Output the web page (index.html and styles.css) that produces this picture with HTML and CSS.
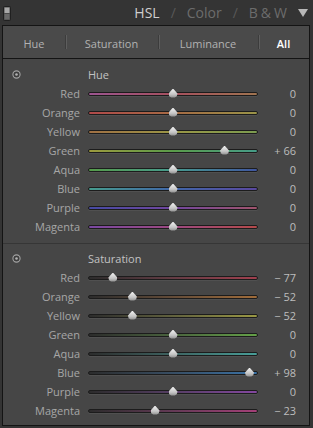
FILE: index.html
```html
<!DOCTYPE html>
<html>
<head>
<meta charset="utf-8">
<link rel="stylesheet" href="styles.css">
</head>
<body>
<header class="top">
  <svg class="grip" width="8" height="15" viewBox="0 0 8 15">
    <rect x="0.5" y="0.5" width="7" height="14" rx="1" fill="#4a4a4a" stroke="#202020"/>
    <rect x="1.5" y="1.5" width="5" height="5.5" fill="#a8a8a8"/>
    <rect x="1.5" y="8" width="5" height="5.5" fill="#6a6a6a"/>
  </svg>
  <div class="title">
    <span class="on">HSL</span><span class="slash">/</span><span class="off">Color</span><span class="slash">/</span><span class="off bw">B&amp;W</span>
  </div>
  <svg class="tri" width="10" height="8" viewBox="0 0 10 8"><path d="M0 0 H10 L5 8 Z" fill="#b8b8b8"/></svg>
</header>
<div class="frame">
  <nav class="tabs">
    <div class="tab">Hue</div>
    <div class="tab sep">Saturation</div>
    <div class="tab sep">Luminance</div>
    <div class="tab sep active">All</div>
  </nav>
  <div class="panel">
    <section class="sect">
      <div class="shead">
        <div class="tog"><svg width="9" height="9" viewBox="0 0 9 9"><circle cx="4.5" cy="4.5" r="3.6" fill="#3c3c3c" stroke="#a2a2a2" stroke-width="1.1"/><circle cx="4.5" cy="4.5" r="1.3" fill="#b4b4b4"/></svg></div>
        <div class="stitle">Hue</div>
      </div>
      <div class="row"><span class="lbl">Red</span><div class="track h-red"><i class="thumb" style="left:50%"></i></div><span class="val">0</span></div>
      <div class="row"><span class="lbl">Orange</span><div class="track h-orange"><i class="thumb" style="left:50%"></i></div><span class="val">0</span></div>
      <div class="row"><span class="lbl">Yellow</span><div class="track h-yellow"><i class="thumb" style="left:50%"></i></div><span class="val">0</span></div>
      <div class="row"><span class="lbl">Green</span><div class="track h-green"><i class="thumb" style="left:80.67%"></i></div><span class="val">+ 66</span></div>
      <div class="row"><span class="lbl">Aqua</span><div class="track h-aqua"><i class="thumb" style="left:50%"></i></div><span class="val">0</span></div>
      <div class="row"><span class="lbl">Blue</span><div class="track h-blue"><i class="thumb" style="left:50%"></i></div><span class="val">0</span></div>
      <div class="row"><span class="lbl">Purple</span><div class="track h-purple"><i class="thumb" style="left:50%"></i></div><span class="val">0</span></div>
      <div class="row"><span class="lbl">Magenta</span><div class="track h-magenta"><i class="thumb" style="left:50%"></i></div><span class="val">0</span></div>
    </section>
    <section class="sect second">
      <div class="shead">
        <div class="tog"><svg width="9" height="9" viewBox="0 0 9 9"><circle cx="4.5" cy="4.5" r="3.6" fill="#3c3c3c" stroke="#a2a2a2" stroke-width="1.1"/><circle cx="4.5" cy="4.5" r="1.3" fill="#b4b4b4"/></svg></div>
        <div class="stitle">Saturation</div>
      </div>
      <div class="row"><span class="lbl">Red</span><div class="track s-red"><i class="thumb" style="left:14.22%"></i></div><span class="val">− 77</span></div>
      <div class="row"><span class="lbl">Orange</span><div class="track s-orange"><i class="thumb" style="left:25.84%"></i></div><span class="val">− 52</span></div>
      <div class="row"><span class="lbl">Yellow</span><div class="track s-yellow"><i class="thumb" style="left:25.84%"></i></div><span class="val">− 52</span></div>
      <div class="row"><span class="lbl">Green</span><div class="track s-green"><i class="thumb" style="left:50%"></i></div><span class="val">0</span></div>
      <div class="row"><span class="lbl">Aqua</span><div class="track s-aqua"><i class="thumb" style="left:50%"></i></div><span class="val">0</span></div>
      <div class="row"><span class="lbl">Blue</span><div class="track s-blue"><i class="thumb" style="left:95.54%"></i></div><span class="val">+ 98</span></div>
      <div class="row"><span class="lbl">Purple</span><div class="track s-purple"><i class="thumb" style="left:50%"></i></div><span class="val">0</span></div>
      <div class="row"><span class="lbl">Magenta</span><div class="track s-magenta"><i class="thumb" style="left:39.31%"></i></div><span class="val">− 23</span></div>
    </section>
  </div>
</div>
</body>
</html>
```
FILE: styles.css
```css
html, body {
  margin: 0;
  padding: 0;
}
body {
  width: 313px;
  height: 428px;
  overflow: hidden;
  background: #343434;
  font-family: "Open Sans", "Liberation Sans", sans-serif;
  font-size: 11px;
  color: #a6a6a6;
}
.top {
  height: 25px;
  display: flex;
  align-items: center;
  padding: 0 5px 0 3px;
}
.grip {
  display: block;
  margin-top: 2px;
}
.title {
  margin-left: auto;
  font-size: 14px;
  line-height: 25px;
  white-space: nowrap;
}
.title .on { color: #cfcfcf; }
.title .off { color: #6c6c6c; }
.title .slash { color: #585858; margin: 0 11px; }
.title .bw { letter-spacing: 3px; }
.tri {
  display: block;
  margin-left: 8px;
}
.frame {
  margin-left: 2px;
  width: 306px;
  height: 399px;
  border: 1px solid #141414;
  background: #464646;
}
.tabs {
  height: 32px;
  display: grid;
  grid-template-columns: 62px 93px 100px 1fr;
  background: #4a4a4a;
  border-bottom: 1px solid #141414;
}
.tab {
  display: flex;
  align-items: center;
  justify-content: center;
  padding-top: 3px;
  color: #b2b2b2;
}
.tab.sep {
  background:
    linear-gradient(#3c3c3c, #3c3c3c) 0 center / 1px 14px no-repeat,
    linear-gradient(#5e5e5e, #5e5e5e) 1px center / 1px 14px no-repeat;
}
.tab.active {
  color: #ffffff;
  font-weight: 600;
}
.panel {
  display: flex;
  flex-direction: column;
}
.sect {
  padding: 6px 0 7px;
}
.sect.second {
  border-top: 1px solid #363636;
  padding: 5px 0 4px;
}
.shead, .row {
  display: grid;
  grid-template-columns: 77px 178px 38px;
  height: 19px;
  align-items: center;
}
.tog {
  padding-left: 9px;
  display: flex;
  align-items: center;
}
.tog svg { display: block; }
.stitle {
  grid-column: 2;
  margin-left: 8px;
  color: #c2c2c2;
  line-height: 19px;
}
.lbl {
  text-align: right;
  line-height: 19px;
}
.track {
  position: relative;
  margin-left: 8px;
  height: 2px;
  width: 168px;
  border: 1px solid #1c1c1c;
  border-radius: 3px;
  box-shadow: 0 1px 0 rgba(255,255,255,0.06);
}
.val {
  text-align: right;
  color: #bdbdbd;
  line-height: 19px;
}
.thumb {
  position: absolute;
  top: -4px;
  width: 9px;
  height: 9px;
  margin-left: -4.5px;
  background: linear-gradient(#f2f2f2, #c4c4c4 60%, #8c8c8c);
  clip-path: polygon(50% 0, 100% 55%, 92% 85%, 70% 100%, 30% 100%, 8% 85%, 0 55%);
  filter: drop-shadow(0 1px 0 #222);
}
.h-red { background: linear-gradient(90deg, #9c5590, #a6505e 50%, #a07450); }
.h-orange { background: linear-gradient(90deg, #b04a4a, #a66a44 50%, #9a9448); }
.h-yellow { background: linear-gradient(90deg, #a07044, #9a9646 50%, #7c9c50); }
.h-green { background: linear-gradient(90deg, #9c9a3e, #5a9c4a 50%, #469c88); }
.h-aqua { background: linear-gradient(90deg, #569c4a, #469a8e 50%, #4056a0); }
.h-blue { background: linear-gradient(90deg, #469c8e, #4066a8 50%, #5a48a0); }
.h-purple { background: linear-gradient(90deg, #464aa4, #70469e 50%, #a0546c); }
.h-magenta { background: linear-gradient(90deg, #7a48a2, #9c4880 50%, #b44a4a); }
.s-red { background: linear-gradient(90deg, #2c2c2c, #643c44 50%, #a0404e); }
.s-orange { background: linear-gradient(90deg, #2c2c2c, #644c38 50%, #a06c3a); }
.s-yellow { background: linear-gradient(90deg, #2c2c2c, #62623e 50%, #9a9844); }
.s-green { background: linear-gradient(90deg, #2c2c2c, #4a643e 50%, #64a048); }
.s-aqua { background: linear-gradient(90deg, #2c2c2c, #3e6462 50%, #489e98); }
.s-blue { background: linear-gradient(90deg, #2c2c2c, #384e64 50%, #3a72a6); }
.s-purple { background: linear-gradient(90deg, #2c2c2c, #563e64 50%, #8448a0); }
.s-magenta { background: linear-gradient(90deg, #2c2c2c, #643a56 50%, #a44078); }
```
